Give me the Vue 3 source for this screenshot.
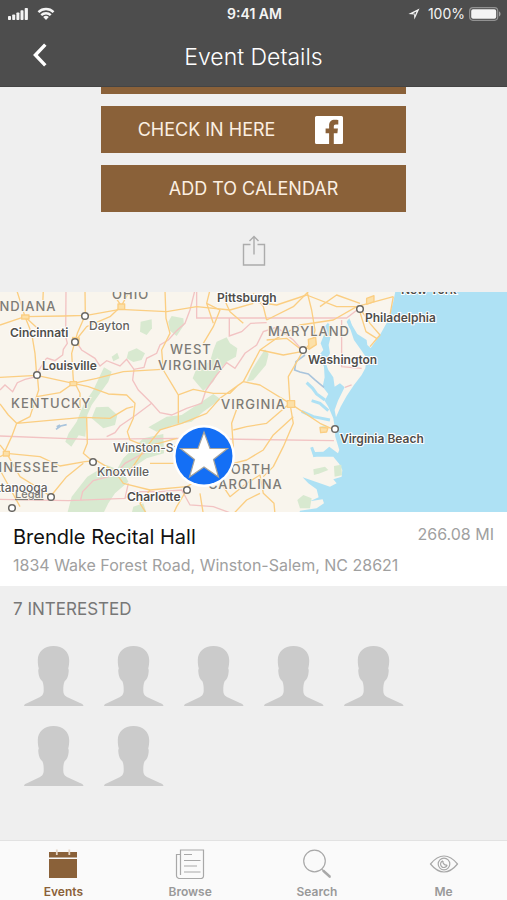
<template>
  <div class="app">
    <header class="header">
      <div class="status-bar">
        <div class="status-side">
          <svg class="icon-signal" viewBox="0 0 20 12" aria-hidden="true">
            <rect x="0" y="8" width="3" height="4" rx="0.8" />
            <rect x="4.2" y="6.5" width="3" height="5.5" rx="0.8" />
            <rect x="8.4" y="4.5" width="3" height="7.5" rx="0.8" />
            <rect x="12.5" y="2.3" width="3" height="9.7" rx="0.8" />
            <rect x="16.7" y="0" width="3.2" height="12" rx="0.8" />
          </svg>
          <svg class="icon-wifi" viewBox="0 0 18 13" aria-hidden="true">
            <path d="M0.6 4.3a12 12 0 0 1 16.8 0l-1.7 1.8a9.5 9.5 0 0 0-13.4 0z" />
            <path d="M3.4 7.2a8 8 0 0 1 11.2 0l-1.7 1.8a5.6 5.6 0 0 0-7.8 0z" />
            <path d="M6.2 10.1a4 4 0 0 1 5.6 0L9 12.9z" />
          </svg>
        </div>
        <span class="clock">9:41 AM</span>
        <div class="status-side status-right">
          <svg class="icon-location" viewBox="0 0 12 12" aria-hidden="true">
            <path d="M0.4 6L11.5 0.6L6.4 11.6L6 6.4z" />
            <path class="location-cut" d="M4.6 5.4L8.6 3.4L6.8 7.4L6.7 5.5z" />
          </svg>
          <span class="battery-level">100%</span>
          <svg class="icon-battery" viewBox="0 0 32 14" aria-hidden="true">
            <rect class="battery-shell" x="0.7" y="0.7" width="28" height="12.6" rx="3.2" />
            <rect x="2.2" y="2.2" width="25" height="9.6" rx="1.8" />
            <path class="battery-cap" d="M30 4.6c2 0.6 2 4.2 0 4.8z" />
          </svg>
        </div>
      </div>
      <div class="nav-bar">
        <button class="back-btn" aria-label="Back">
          <svg viewBox="0 0 14 24" aria-hidden="true">
            <path d="M12.3 1.6L2.4 12L12.3 22.4" />
          </svg>
        </button>
        <h1>Event Details</h1>
      </div>
    </header>

    <main class="content">
      <div class="actions">
        <button class="action-btn" aria-label="Interested"></button>
        <button class="action-btn check-in">
          <span>CHECK IN HERE</span>
          <svg class="icon-facebook" viewBox="0 0 28 28" aria-hidden="true">
            <path
              d="M1.5 0h25A1.5 1.5 0 0 1 28 1.5v25a1.5 1.5 0 0 1-1.5 1.5H18.8V17.2h3.6l0.5-4.6h-4.1v-2.2c0-1.3 0.5-2 2-2h2.5V4c-0.5-0.1-1.9-0.2-3.5-0.2-3.5 0-5.7 2-5.7 5.8v3H10.6v4.6h3.5V28H1.5A1.5 1.5 0 0 1 0 26.5v-25A1.5 1.5 0 0 1 1.5 0z"
            />
          </svg>
        </button>
        <button class="action-btn">ADD TO CALENDAR</button>
      </div>

      <button class="share-btn" aria-label="Share">
        <svg viewBox="0 0 24 32" aria-hidden="true">
          <path d="M8.5 9.5H1.5V30H22.5V9.5H15.5" />
          <path d="M12 19.5V1.5M7.5 6L12 1.5L16.5 6" />
        </svg>
      </button>

      <svg class="map" viewBox="0 292 507 220" preserveAspectRatio="xMidYMid slice" role="img" aria-label="Map">
        <rect class="water" x="0" y="292" width="507" height="220" />

        <!-- terrain is drawn at three times the label scale -->
        <g transform="translate(0 290) scale(0.3333)">
          <path
            class="land"
            d="M0 0H1187L1180 35L1165 90L1140 135L1112 174L1102 165L1100 150L1072 132L1056 105L1048 85L1040 95L1052 120L1062 150L1085 182L1100 205L1096 235L1085 255L1062 285L1040 318L1022 350L1008 382L1004 360L1014 332L1034 292L1020 280L1004 290L1000 262L985 240L976 215L990 190L986 165L992 140L996 115L984 98L970 115L974 130L962 160L970 180L958 195L972 230L974 262L968 290L985 312L974 332L985 350L1000 385L1004 410L1006 440L1018 480L1014 490L988 470L970 485L945 486L935 470L940 500L1000 500L1018 522L1027 540L1025 560L1000 568L1010 580L990 590L960 580L908 562L925 580L950 598L956 622L930 634L968 628L972 640L950 655L900 662L895 680H0Z"
          />

          <g class="park">
            <path d="M422 95L455 88L456 115L440 135L420 125Z" />
            <path d="M515 78L550 85L552 105L530 138L510 122L505 95Z" />
            <path d="M385 185L410 175L435 190L425 210L400 216L380 205Z" />
            <path d="M335 200L352 188L358 205L340 214Z" />
            <path d="M650 155L680 142L690 160L712 175L708 200L680 215L655 245L640 275L610 302L595 285L578 265L590 235L630 215L640 180Z" />
            <path d="M312 232L335 245L325 275L300 310L275 345L262 375L256 440L236 436L214 470L196 455L206 430L230 395L250 345L280 300Z" />
            <path d="M288 352L325 350L352 375L345 405L310 415L275 385Z" />
            <path d="M445 412L500 380L545 375L640 312L662 328L610 365L575 395L520 405L470 425Z" />
            <path d="M430 445L490 432L492 490L440 505L380 545L350 540L370 505Z" />
            <path d="M262 560L320 525L370 545L385 575L345 610L325 640L310 670H202L215 620Z" />
            <path d="M795 178L806 192L798 225L760 270L740 275L755 240Z" />
            <path d="M940 538L975 530L985 540L960 550L942 555Z" />
            <path d="M1002 528L1024 524L1026 556L1004 560Z" />
            <path d="M892 630L910 615L935 625L930 655L900 655Z" />
            <path d="M400 650L430 640L440 670H395Z" />
            <path d="M960 410L978 405L980 425L962 430Z" />
          </g>

          <g class="inlet">
            <path d="M975 330L950 312L938 295L920 278M985 362L960 340L935 332M990 390L940 380L905 364M945 500L935 472M1046 92L1052 112" />
          </g>
          <path class="creek" d="M168 418L182 408L200 404M180 405L170 410M915 195L888 215L884 240L900 246L925 252L945 270L972 292" />

          <g class="border">
            <path d="M198 0L197 140L202 160L190 178L188 195L165 212L140 204M140 204L120 235L100 262L75 268L52 278L38 305L15 285L0 300" />
            <path d="M228 155L245 180L285 205L300 228L320 212L360 228L380 208L402 238L432 232L440 205L470 190L480 165L505 150L530 122L555 100L570 60L585 0" />
            <path d="M590 0V84H1040L1078 55M688 84V138L725 125L752 100L800 98M1025 90V230L1085 235" />
            <path d="M402 238L398 270L415 300L455 340L480 368L515 375L560 355L605 340L618 300L650 255L680 218L705 235L735 190L770 165L790 125L830 112L880 150L905 178" />
            <path d="M455 340L408 375L360 408L345 428L320 440M0 438L260 448L530 445L1002 452" />
            <path d="M0 628L205 632L375 625L385 580M242 630L248 605L280 572L345 555L375 520L430 490L470 460M375 625L400 605L480 605L545 600L570 645L640 650L700 672M1035 292L1055 285" />
          </g>

          <g class="road">
            <path d="M0 105L50 88L75 80L190 78L260 76L360 58L500 65L590 50L690 60L760 40M50 0L75 80L95 130L105 190L110 255M75 80L118 120M130 0L128 45" />
            <path d="M255 0L256 75L232 130L215 190L220 270L240 310L240 360M228 150L260 110L330 80L364 48L390 0M364 48L345 20M495 0L498 85L510 130L485 180L490 240L520 290L535 315L535 400" />
            <path d="M0 262L110 256L220 280L290 265L370 245L485 238M220 280L180 308L110 320M220 280L265 290L325 312L380 315L405 340L400 385L382 425L390 450L440 470" />
            <path d="M112 256L116 300L90 380L50 400L35 440L12 490M0 342L25 375L50 400M50 400L140 392L250 382L330 385L380 355L400 350M260 382L262 460L250 490L280 515" />
            <path d="M0 500L20 490L120 500L180 528L255 515L290 512L345 545L395 535L440 470L530 445M20 490L60 560L125 600L155 622M155 615L200 560L250 520M20 490L0 465M0 540L60 650" />
            <path d="M440 470L480 420L545 400L620 370L660 325L730 275L780 180L830 145L900 105L1000 90L1070 50L1180 20M535 315L580 298L640 310L690 310L715 285" />
            <path d="M610 160L640 110L660 60L620 40L630 0M620 40L640 100M660 0L690 65L730 100M800 90L880 50L930 0M800 90L790 50L760 10M920 0L935 60L945 120L935 170L910 180" />
            <path d="M730 275L780 285L870 340L960 400L1000 418M870 340L865 260L905 190L935 155M870 340L800 400L740 410L700 420M870 340L880 400L850 470L820 530L790 560" />
            <path d="M720 330L695 400L700 470L690 500M880 380L820 435L790 480L740 510L700 520M345 545L370 580L450 600L560 590L640 545L700 520M560 600L530 650L520 672" />
            <path d="M640 545L690 620L740 580L780 555L790 610L822 640L825 672M700 672L740 630L780 610M450 600L420 640L440 672M600 610L610 672M450 520L520 520" />
            <path d="M1080 55L1110 100L1140 135L1110 170M1078 60L1098 125L1130 145M1180 20L1170 75M760 35L830 45L920 15L1010 50L1070 50M960 50L1010 15L1080 40M800 150L860 145L905 180M780 180L850 195L905 185" />
          </g>
          <g class="hub">
            <path d="M65 75h22v12h-22zM354 42h20v16h-20zM210 275h20v12h-20zM10 484h18v14h-18zM862 332h22v20h-22z" />
            <path d="M925 148l22-6 2 22-22 14zM960 412l24 2-4 12-18 2zM1100 25l22-8 0 18-22 8zM218 142l20 2-2 22-20-2z" />
          </g>
        </g>

        <g class="region">
          <text v-for="r in regions" :key="r.name + r.y" :x="r.x" :y="r.y">{{ r.name }}</text>
        </g>

        <g class="dot">
          <circle v-for="c in dots" :key="c.join()" :cx="c[0]" :cy="c[1]" r="3.3" />
        </g>

        <g>
          <text
            v-for="c in cities"
            :key="c.name"
            class="city"
            :class="{ minor: c.minor }"
            :x="c.x"
            :y="c.y"
          >{{ c.name }}</text>
        </g>
        <text class="legal" x="15" y="498">Legal</text>

        <g class="pin">
          <circle class="pin-ring" cx="204" cy="456" r="31" />
          <circle class="pin-disc" cx="204" cy="456" r="28.5" />
          <path d="M204 432l6 16.500h17.500l-14 11 5 17.500-14.500-10-14.500 10 5-17.500-14-11h17.500z" />
        </g>
      </svg>

      <section class="venue">
        <div>
          <h2>Brendle Recital Hall</h2>
          <p class="address">1834 Wake Forest Road, Winston-Salem, NC 28621</p>
        </div>
        <span class="distance">266.08 MI</span>
      </section>

      <section class="interested">
        <h3>7 INTERESTED</h3>
        <ul class="people">
          <li v-for="n in 7" :key="n">
            <svg viewBox="0 0 60 60" aria-hidden="true">
              <path
                d="M29.500 0C39 0 45.200 6 45.200 14c0 3-0.200 6-1 8.500c0.800 1 0.600 3.500 0 6.500c-0.700 3.500-2.200 5-3.700 6.500c-1 2.500-1.300 5-1.200 9c0 4 1.700 5.500 4.700 7L56 57c1.800 0.700 3 1.200 3.500 3H0c0.500-1.800 1.700-2.300 3.500-3L15 51.500c3-1.500 4.700-3 4.700-7c0.100-4-0.200-6.500-1.200-9c-1.500-1.500-3-3-3.700-6.500c-0.600-3-0.800-5.500 0-6.500C14 20 13.800 17 13.800 14C13.800 6 20 0 29.500 0z"
              />
            </svg>
          </li>
        </ul>
      </section>
    </main>

    <nav class="tab-bar">
      <a href="#events" class="tab active">
        <svg viewBox="0 0 30 30" aria-hidden="true">
          <path class="fill" d="M1 3H29V8.5H1zM1 10H29V29H1z" />
          <path class="ring" d="M8.8 0.5V6M21.3 0.5V6" />
        </svg>
        <span>Events</span>
      </a>
      <a href="#browse" class="tab">
        <svg viewBox="0 0 30 30" aria-hidden="true">
          <path d="M5.5 26V1H28.5V27a2.500 2.500 0 0 1-2.500 2.500H4.500A3 3 0 0 1 1.500 26.500V5.500H5.500" />
          <path d="M9 5.500H17M9 11.500H25.500M9 17H22M9 23H25.500" />
        </svg>
        <span>Browse</span>
      </a>
      <a href="#search" class="tab">
        <svg viewBox="0 0 30 30" aria-hidden="true">
          <circle cx="12.5" cy="12" r="10.8" />
          <path d="M19.5 20L28.5 28.5" />
          <path class="handle" d="M21 21.5L28.2 28" />
        </svg>
        <span>Search</span>
      </a>
      <a href="#me" class="tab">
        <svg viewBox="0 0 30 30" aria-hidden="true">
          <path d="M1.500 15C6 9.500 10.500 7 15 7S24 9.500 28.500 15C24 20.500 19.500 23 15 23S6 20.500 1.500 15z" />
          <circle cx="15" cy="15" r="5.800" />
          <path d="M14 11.800a3.400 3.400 0 1 0 4.200 4.200M14 11.800c-0.500 2.500 1.500 4.700 4.200 4.200" />
        </svg>
        <span>Me</span>
      </a>
    </nav>
  </div>
</template>

<script setup>
// state names
const regions = [
  { name: 'INDIANA', x: -5, y: 311 },
  { name: 'OHIO', x: 112, y: 299 },
  { name: 'WEST', x: 170, y: 354 },
  { name: 'VIRGINIA', x: 158, y: 370 },
  { name: 'KENTUCKY', x: 11, y: 408 },
  { name: 'VIRGINIA', x: 221, y: 409 },
  { name: 'MARYLAND', x: 268, y: 336 },
  { name: 'TENNESSEE', x: -26, y: 472 },
  { name: 'NORTH', x: 220, y: 474 },
  { name: 'CAROLINA', x: 208, y: 489 }
]

const cities = [
  { name: 'Pittsburgh', x: 217, y: 302 },
  { name: 'New York', x: 401, y: 294 },
  { name: 'Philadelphia', x: 365, y: 322 },
  { name: 'Cincinnati', x: 10, y: 337 },
  { name: 'Louisville', x: 42, y: 370 },
  { name: 'Washington', x: 308, y: 364 },
  { name: 'Virginia Beach', x: 340, y: 443 },
  { name: 'Charlotte', x: 127, y: 501 },
  { name: 'Dayton', x: 89, y: 330, minor: true },
  { name: 'Winston-Salem', x: 113, y: 452, minor: true },
  { name: 'Knoxville', x: 97, y: 476, minor: true },
  { name: 'Chattanooga', x: -26, y: 492, minor: true }
]

const dots = [
  [85, 316],
  [75, 342],
  [37, 375],
  [360, 309],
  [303, 350],
  [335, 429],
  [93, 462],
  [187, 490],
  [51, 497],
  [12, 508]
]
</script>

<style>
body {
  background: #efefef;
}
</style>

<style scoped>
.app {
  display: flex;
  flex-direction: column;
  min-height: 100vh;
  font-family: Inter, 'Liberation Sans', sans-serif;
  background: #efefef;
}

button {
  padding: 0;
  border: none;
  background: none;
  font-family: inherit;
  cursor: pointer;
}

h1,
h2,
h3,
p,
ul {
  margin: 0;
  padding: 0;
}

.header {
  background: #4d4d4d;
  border-bottom: 1px solid #444444;
  color: #ffffff;
}

.status-bar {
  display: flex;
  align-items: center;
  height: 27px;
  padding: 0 6px 0 8px;
}

.status-bar svg {
  fill: #f4f4f4;
}

.status-side {
  display: flex;
  flex: 1;
  align-items: center;
  gap: 9px;
}

.status-right {
  justify-content: flex-end;
  gap: 4px;
}

.icon-signal {
  width: 20px;
  height: 12px;
}

.icon-wifi {
  width: 18px;
  height: 13px;
}

.clock {
  font-size: 14px;
  font-weight: 600;
  color: #f4f4f4;
}

.icon-location {
  width: 12px;
  height: 12px;
  margin-right: 4px;
}

.status-bar .location-cut {
  fill: #4d4d4d;
}

.battery-level {
  font-size: 14px;
  color: #f4f4f4;
}

.icon-battery {
  width: 32px;
  height: 14px;
}

.status-bar .battery-shell {
  fill: none;
  stroke: #929292;
  stroke-width: 1.2;
}

.status-bar .battery-cap {
  fill: #a2a2a2;
}

.nav-bar {
  display: grid;
  grid-template-columns: 80px 1fr 80px;
  align-items: center;
  height: 59px;
}

.nav-bar h1 {
  font-size: 23px;
  font-weight: 300;
  text-align: center;
}

.back-btn {
  display: flex;
  align-items: center;
  justify-content: center;
  height: 44px;
  padding-bottom: 4px;
}

.back-btn svg {
  width: 14px;
  height: 24px;
  fill: none;
  stroke: #ffffff;
  stroke-width: 3.4;
}

.content {
  display: flex;
  flex: 1;
  flex-direction: column;
  overflow: hidden;
}

/* first button is scrolled under the header */
.actions {
  display: flex;
  flex-direction: column;
  align-items: center;
  gap: 12px;
  margin-top: -40px;
}

.action-btn {
  width: 60%;
  height: 47px;
  background: #8a6139;
  color: #fbefe2;
  font-size: 18px;
}

.check-in {
  display: flex;
  align-items: center;
  justify-content: center;
  gap: 40px;
  padding-right: 26px;
}

.icon-facebook {
  width: 28px;
  height: 28px;
  fill: #ffffff;
}

.share-btn {
  display: flex;
  align-self: center;
  margin: 23px 0 25px;
}

.share-btn svg {
  width: 24px;
  height: 32px;
  fill: none;
  stroke: #acacac;
  stroke-width: 1.4;
}

.map {
  display: block;
  width: 100%;
  height: 220px;
}

.water {
  fill: #aee1f4;
}

.land {
  fill: #f9f5ed;
}

.park {
  fill: #d8e9d0;
}

.inlet {
  fill: none;
  stroke: #aee1f4;
  stroke-width: 9;
}

.creek {
  fill: none;
  stroke: #a9c4dc;
  stroke-width: 5;
}

.border {
  fill: none;
  stroke: #f2c3c3;
  stroke-width: 4;
}

.road {
  fill: none;
  stroke: #fbce82;
  stroke-width: 4;
  stroke-linejoin: round;
}

.hub {
  fill: #fce0a8;
  stroke: #fbce82;
  stroke-width: 4;
  stroke-linejoin: round;
}

.region text {
  font-size: 13px;
  font-weight: 500;
  letter-spacing: 1px;
  fill: #7d7b76;
  stroke: #f9f5ed;
  stroke-width: 2;
  paint-order: stroke;
}

.city {
  font-size: 12px;
  font-weight: 600;
  fill: #4f4e4b;
  stroke: #ffffff;
  stroke-width: 2;
  paint-order: stroke;
}

.city.minor {
  font-weight: 500;
  fill: #63615d;
}

.legal {
  font-size: 11px;
  font-weight: 500;
  text-decoration: underline;
  fill: #807e79;
}

.dot {
  fill: #ffffff;
  stroke: #6a6864;
  stroke-width: 1.5;
}

.pin-ring {
  fill: #ffffff;
}

.pin-disc {
  fill: #146ff5;
}

.pin path {
  fill: #ffffff;
  stroke: #a5a39c;
  stroke-width: 1.2;
}

.venue {
  display: flex;
  justify-content: space-between;
  min-height: 74px;
  padding: 11px 13px 7px;
  box-sizing: border-box;
  background: #ffffff;
}

.venue h2 {
  font-size: 20px;
  font-weight: 400;
  line-height: 28px;
  color: #111111;
}

.address {
  font-size: 16px;
  line-height: 28px;
  color: #a0a0a0;
}

.distance {
  font-size: 16px;
  line-height: 22px;
  white-space: nowrap;
  color: #a0a0a0;
}

.interested {
  padding-bottom: 54px;
}

.interested h3 {
  padding: 11px 13px;
  font-size: 17px;
  font-weight: 400;
  line-height: 24px;
  color: #777777;
}

.people {
  display: grid;
  grid-template-columns: repeat(5, 60px);
  gap: 20px;
  padding: 14px 24px 0;
  list-style: none;
}

.people svg {
  display: block;
  width: 60px;
  height: 60px;
  fill: #cbcbcb;
}

.tab-bar {
  display: grid;
  grid-template-columns: repeat(4, 1fr);
  height: 60px;
  box-sizing: border-box;
  border-top: 1px solid #e2e2e2;
  background: #fafafa;
}

.tab {
  display: flex;
  flex-direction: column;
  align-items: center;
  gap: 5px;
  padding-top: 8px;
  font-size: 12px;
  font-weight: 600;
  line-height: 16px;
  color: #999999;
  text-decoration: none;
}

.tab svg {
  width: 30px;
  height: 30px;
  fill: none;
  stroke: #a8a8a8;
  stroke-width: 1.2;
}

.tab .handle {
  stroke-width: 2.4;
}

.tab.active {
  color: #8a6139;
}

.tab .fill {
  fill: #8a6139;
  stroke: none;
}

.tab .ring {
  stroke: #e6d5c4;
  stroke-width: 1.8;
}
</style>
